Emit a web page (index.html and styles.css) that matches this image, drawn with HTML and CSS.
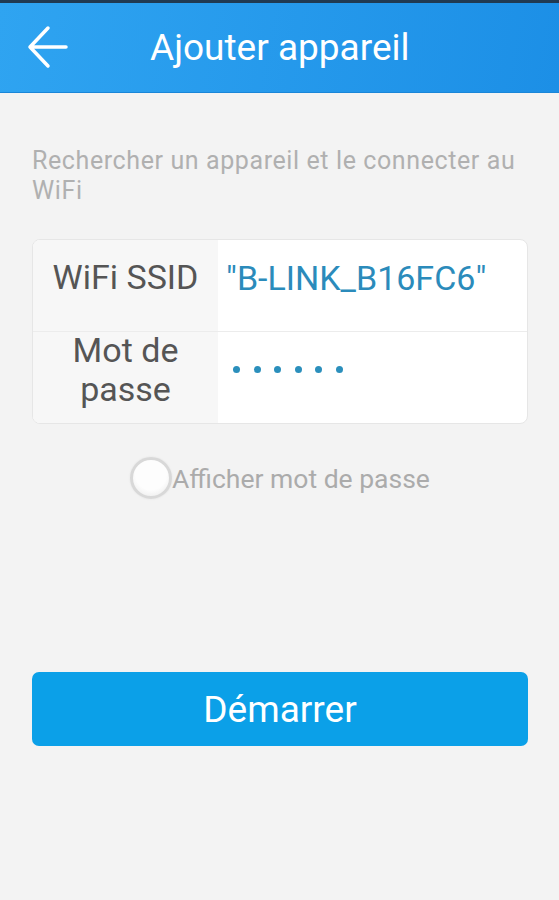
FILE: index.html
```html
<!DOCTYPE html>
<html lang="fr">
<head>
    <meta charset="UTF-8">
    <meta name="viewport" content="width=device-width, initial-scale=1.0">
    <title>Ajouter appareil</title>
    <link rel="stylesheet" href="styles.css">
</head>
<body>

<div class="status-strip"></div>
<header class="top-bar">
    <a href="#" class="back-button">
        <svg width="44" height="50" viewBox="0 0 44 50">
            <path d="M4 23 H40 M4 23 L22 4 M4 23 L22 42" stroke="#fff" stroke-width="3.5" fill="none" stroke-linecap="round" stroke-linejoin="round"/>
        </svg>
    </a>
    <h1>Ajouter appareil</h1>
</header>

<div class="container">
    <p class="hint">Rechercher un appareil et le connecter au WiFi</p>

    <div class="card">
        <div class="row">
            <div class="label">WiFi SSID</div>
            <div class="value ssid">"B-LINK_B16FC6"</div>
        </div>
        <div class="row">
            <div class="label">Mot de<br>passe</div>
            <div class="value">
                <span class="dots"><i></i><i></i><i></i><i></i><i></i><i></i></span>
            </div>
        </div>
    </div>

    <label class="show-pass">
        <span class="radio"></span>
        <span>Afficher mot de passe</span>
    </label>

    <button class="start">Démarrer</button>
</div>

</body>
</html>
```

FILE: styles.css
```css
body {
    font-family: Roboto, "Noto Sans", sans-serif;
    margin: 0;
    padding: 0;
    background-color: #f3f3f3;
}
.status-strip {
    height: 3px;
    background-color: #203a52;
}
.top-bar {
    display: flex;
    align-items: center;
    height: 90px;
    background: linear-gradient(100deg, #2fa4f1, #1c8fe6);
    border-bottom: 1px solid #1a86d8;
    box-sizing: border-box;
    color: white;
}
.back-button {
    display: flex;
    margin-left: 26px;
    margin-top: 2px;
}
.top-bar h1 {
    margin: 0 0 0 80px;
    font-size: 37px;
    font-weight: normal;
    color: #fff;
}
.container {
    padding: 0 31px 0 32px;
}
.hint {
    margin: 53px 0 0;
    font-size: 25px;
    letter-spacing: 0.6px;
    line-height: 30px;
    color: #b0b0b0;
}
.card {
    margin-top: 33px;
    background-color: #fff;
    border: 1px solid #e6e6e6;
    border-radius: 8px;
    overflow: hidden;
}
.row {
    display: flex;
    height: 91px;
}
.row + .row {
    border-top: 1px solid #ececec;
}
.label {
    width: 185px;
    display: flex;
    align-items: center;
    justify-content: center;
    box-sizing: border-box;
    padding-bottom: 16px;
    text-align: center;
    background-color: #f7f7f7;
    font-size: 34px;
    line-height: 39px;
    color: #555;
}
.value {
    flex: 1;
    display: flex;
    align-items: center;
    box-sizing: border-box;
    padding-left: 8px;
    padding-bottom: 16px;
    font-size: 34px;
    color: #2b8bbb;
}
.dots {
    display: flex;
    gap: 13.6px;
    margin-left: 7px;
}
.dots i {
    width: 7px;
    height: 7px;
    border-radius: 50%;
    background-color: #2b8fbc;
}
.show-pass {
    display: flex;
    align-items: center;
    justify-content: center;
    margin-top: 33px;
    font-size: 26.5px;
    color: #ababab;
}
.radio {
    width: 42px;
    height: 42px;
    border-radius: 50%;
    box-sizing: border-box;
    border: 3px solid #d8d8d8;
    background: radial-gradient(circle at 50% 40%, #fdfdfd 55%, #e6e6e6 100%);
    box-shadow: 0 0 2px #e0e0e0;
}
.start {
    display: block;
    width: 100%;
    height: 74px;
    margin-top: 173px;
    background-color: #0ba0e8;
    color: white;
    border: none;
    border-radius: 7px;
    font-family: Roboto, "Noto Sans", sans-serif;
    font-size: 37px;
    cursor: pointer;
}
```
